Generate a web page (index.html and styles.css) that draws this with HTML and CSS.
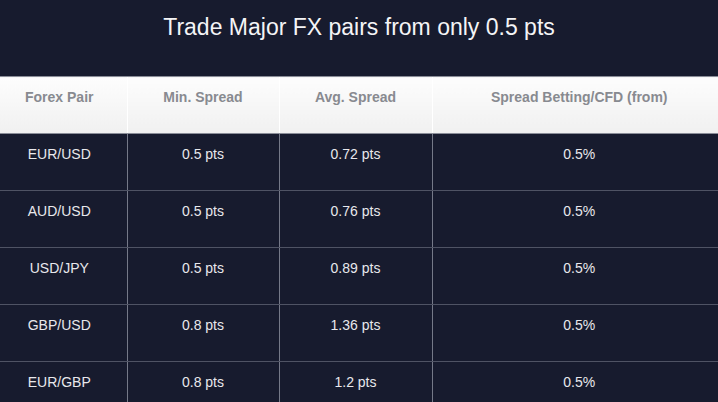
FILE: index.html
```html
<!DOCTYPE html>
<html>
<head>
<meta charset="utf-8">
<link rel="stylesheet" href="styles.css">
</head>
<body>
<div class="page">
  <h1 class="title">Trade Major FX pairs from only 0.5 pts</h1>
  <div class="table-wrap">
    <table class="fx">
      <thead>
        <tr>
          <th class="c1">Forex Pair</th>
          <th class="c2">Min. Spread</th>
          <th class="c3">Avg. Spread</th>
          <th class="c4">Spread Betting/CFD (from)</th>
        </tr>
      </thead>
      <tbody>
        <tr><td>EUR/USD</td><td>0.5 pts</td><td>0.72 pts</td><td>0.5%</td></tr>
        <tr><td>AUD/USD</td><td>0.5 pts</td><td>0.76 pts</td><td>0.5%</td></tr>
        <tr><td>USD/JPY</td><td>0.5 pts</td><td>0.89 pts</td><td>0.5%</td></tr>
        <tr><td>GBP/USD</td><td>0.8 pts</td><td>1.36 pts</td><td>0.5%</td></tr>
        <tr><td>EUR/GBP</td><td>0.8 pts</td><td>1.2 pts</td><td>0.5%</td></tr>
      </tbody>
    </table>
  </div>
</div>
</body>
</html>
```

FILE: styles.css
```css
html, body {
  margin: 0;
  padding: 0;
  background: #171b2e;
  overflow: hidden;
}
.page {
  width: 718px;
  height: 402px;
  overflow: hidden;
  font-family: "Liberation Sans", Arial, sans-serif;
}
.title {
  margin: 0;
  height: 76px;
  padding-top: 12px;
  box-sizing: border-box;
  text-align: center;
  font-weight: normal;
  font-size: 23px;
  line-height: 30px;
  color: #f4f4f6;
}
.table-wrap {
  margin: 0 -8px;
}
.fx {
  width: 734px;
  border-collapse: collapse;
  table-layout: fixed;
}
.fx th, .fx td {
  height: 57px;
  box-sizing: border-box;
  padding: 12px 4px 0;
  vertical-align: top;
  text-align: center;
  font-size: 14px;
  line-height: 16px;
}
.fx th {
  font-weight: bold;
  color: #888a90;
  background: linear-gradient(#fdfdfd, #f0f0f0);
  border-top: 1px solid #8a8d98;
  border-bottom: 1px solid #8a8d98;
  border-left: 1px solid #ffffff;
}
.fx th:first-child { border-left: none; }
.fx td {
  color: #e8e8ec;
  border-bottom: 1px solid #4f5364;
  border-left: 1px solid #757988;
}
.fx td:first-child { border-left: none; }
.c1 { width: 135px; }
.c2 { width: 152px; }
.c3 { width: 153px; }
.c4 { width: 294px; }
```
